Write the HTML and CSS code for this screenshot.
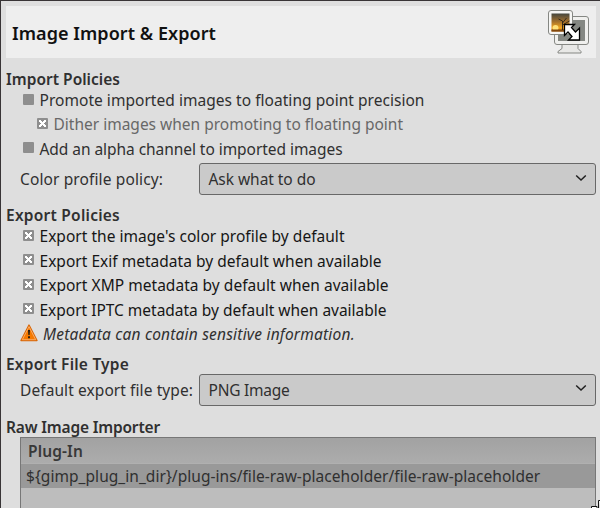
FILE: index.html
```html
<!DOCTYPE html>
<html lang="en">
<head>
<meta charset="utf-8">
<title>Image Import &amp; Export</title>
<link rel="stylesheet" href="styles.css">
</head>
<body>
<main class="page">
  <header class="banner">
    <h1>Image Import &amp; Export</h1>
    <svg class="banner-icon" width="44" height="46" viewBox="0 0 44 46">
      <path d="M15 35.500h16v4l3 3v1.500H11v-1.500l4-3z" fill="#e8e8e6" stroke="#858783"/>
      <rect x="7.500" y="7.500" width="34" height="28" rx="2.500" fill="#f0f0ee" stroke="#858783"/>
      <rect x="11" y="11" width="27" height="21" fill="#858883"/>
      <rect x="1.500" y="1.500" width="24" height="24" rx="2.500" fill="#f6f6f4" stroke="#858783"/>
      <defs><linearGradient id="sunset" x2="0" y2="1"><stop offset="0" stop-color="#44463f"/><stop offset=".45" stop-color="#a2702c"/><stop offset=".8" stop-color="#f4a51d"/><stop offset="1" stop-color="#a4590b"/></linearGradient></defs>
      <rect x="4.500" y="4.500" width="18" height="18" fill="url(#sunset)"/>
      <circle cx="8.500" cy="19" r="3" fill="#ffe27a"/>
      <path d="M4.500 20.500h18v2h-18z" fill="#81470d"/>
      <path d="M15.500 21v-9l-4-2M15.500 14l4-5M15.500 16l7-4" fill="none" stroke="#372b1b"/>
      <path d="M17.500 15.500h10l-3 3 4 4.500 4-4V31H21.500l3.500-3.500-4-4.500-3.500 3.500z" fill="#fff" stroke="#000" stroke-width="1.300"/>
    </svg>
  </header>

  <section class="section import">
    <h2 class="w-import">Import Policies</h2>
    <div class="check"><i class="box"></i><span class="w-promote">Promote imported images to floating point precision</span></div>
    <div class="check nested"><i class="box on"></i><span>Dither images when promoting to floating point</span></div>
    <div class="check"><i class="box"></i><span class="w-alpha">Add an alpha channel to imported images</span></div>
    <div class="field"><span class="label w-policy">Color profile policy:</span>
      <div class="select"><span class="w-ask">Ask what to do</span><svg class="chevron" width="12" height="8" viewBox="0 0 12 8"><path d="M1.200 1.500 6 6l4.800-4.500"/></svg></div>
    </div>
  </section>

  <section class="section export">
    <h2 class="w-export">Export Policies</h2>
    <div class="check strong"><i class="box on"></i><span class="w-profile">Export the image's color profile by default</span></div>
    <div class="check strong"><i class="box on"></i><span class="w-exif">Export Exif metadata by default when available</span></div>
    <div class="check strong"><i class="box on"></i><span class="w-xmp">Export XMP metadata by default when available</span></div>
    <div class="check strong"><i class="box on"></i><span class="w-iptc">Export IPTC metadata by default when available</span></div>
    <div class="hint"><svg width="18" height="18" viewBox="0 0 18 18"><path d="M9 1 17 16.500H1z" fill="#f57900" stroke="#d9690b" stroke-width="1.400" stroke-linejoin="round"/><path d="M9 2.600 15.700 15.700H2.300z" fill="none" stroke="#fcb77a" stroke-width=".8"/><path d="M8 6h2l-.4 5H8.400zM8.100 12.300h1.800v1.900H8.100z" fill="#201810"/></svg><span>Metadata can contain sensitive information.</span></div>
  </section>

  <section class="section filetype">
    <h2 class="w-type">Export File Type</h2>
    <div class="field"><span class="label w-default">Default export file type:</span>
      <div class="select"><span class="w-png">PNG Image</span><svg class="chevron" width="12" height="8" viewBox="0 0 12 8"><path d="M1.200 1.500 6 6l4.800-4.500"/></svg></div>
    </div>
  </section>

  <section class="section raw">
    <h2 class="w-raw">Raw Image Importer</h2>
    <div class="list">
      <div class="list-head">Plug-In</div>
      <div class="list-row">${gimp_plug_in_dir}/plug-ins/file-raw-placeholder/file-raw-placeholder</div>
    </div>
  </section>
  <svg class="grip" width="10" height="10" viewBox="0 0 10 10"><path d="M8.500 10V2.500H10M1.500 10V8.500H7V10" fill="#fff" stroke="#111"/></svg>
</main>
</body>
</html>
```
FILE: styles.css
```css
* { box-sizing: border-box; }
body { margin: 0; background: #dedede; overflow: hidden; }
.page {
  position: relative;
  display: flex;
  flex-direction: column;
  width: 600px;
  height: 508px;
  padding: 5px 4px 0 5px;
  border-top: 1px solid #383436;
  border-left: 1px solid #383436;
  background: #dedede;
  color: #303030;
  font: 15.5px/24px "Noto Sans", sans-serif;
  white-space: nowrap;
  overflow: hidden;
}
.banner {
  display: flex;
  align-items: center;
  justify-content: space-between;
  flex: none;
  height: 52px;
  margin-bottom: 1px;
  padding: 0 5px 0 6px;
  background: #eeeeee;
}
h1 { margin: 0; padding-top: 1px; color: #111; font-size: 18px; font-weight: 600; letter-spacing: .06px; }
h2 { height: 20px; margin: 0; font-size: 15.5px; font-weight: 600; line-height: 22px; }
.section { display: flex; flex-direction: column; flex: none; }
.import { margin-top: 9px; }
.export { margin-top: 10px; }
.export h2 { height: 19px; line-height: 21px; }
.filetype { margin-top: 8px; }
.filetype h2, .raw h2 { line-height: 20px; }
.raw { margin-top: 11px; }
.check { display: flex; align-items: center; gap: 6px; height: 24.5px; padding-left: 17px; }
.import .check:nth-child(2) { height: 24px; }
.import .nested { padding-left: 31px; color: #686868; }
.strong { color: #161616; }
.box {
  flex: none;
  width: 11px;
  height: 11px;
  margin-bottom: 2px;
  border-radius: 1px;
  background: #8e8e8e;
}
.box.on {
  background:
    linear-gradient(45deg, transparent 38%, #fff 38% 62%, transparent 62%) center / 7px 7px no-repeat,
    linear-gradient(-45deg, transparent 38%, #fff 38% 62%, transparent 62%) center / 7px 7px no-repeat,
    #8e8e8e;
}
.check span { margin-left: -.5px; }
.field { display: flex; align-items: center; height: 32px; padding-left: 14px; }
.import .field { margin-top: 2px; }
.label { flex: none; width: 179px; }
.select {
  display: flex;
  align-items: center;
  justify-content: space-between;
  flex: 1;
  height: 32px;
  padding: 0 8px 0 8.5px;
  border: 1px solid #686868;
  border-radius: 3px;
  background: #cacaca;
}
.chevron { margin-bottom: 3px; fill: none; stroke: #202020; stroke-width: 1.5; }
.hint { display: flex; align-items: center; gap: 5px; height: 23.5px; padding-left: 14px; font-style: italic; letter-spacing: .2px; }
.hint svg { margin-bottom: 2px; }
.list {
  height: 90px;
  margin-left: 14px;
  border: 1px solid #777;
  background: #bdbdbd;
}
.list-head {
  height: 26px;
  padding-left: 7px;
  border-bottom: 1px solid #b0b0b0;
  background: linear-gradient(#a2a2a2, #acacac);
  color: #383838;
  font-weight: 600;
  letter-spacing: .13px;
  line-height: 26px;
}
.list-row { height: 24px; padding-left: 5px; background: #999; letter-spacing: .045px; }
.grip { position: absolute; right: 0; bottom: 0; }
.w-promote, .w-xmp { letter-spacing: .036px; }
.w-alpha { letter-spacing: -.053px; }
.w-policy { letter-spacing: .119px; }
.w-ask { letter-spacing: -.045px; }
.w-export { letter-spacing: .241px; }
.w-profile { letter-spacing: .027px; }
.w-import, .w-exif { letter-spacing: .021px; }
.w-iptc { letter-spacing: -.013px; }
.w-type { letter-spacing: .211px; }
.w-default { letter-spacing: .084px; }
.w-png { letter-spacing: -.243px; }
.w-raw { letter-spacing: -.173px; }
```
